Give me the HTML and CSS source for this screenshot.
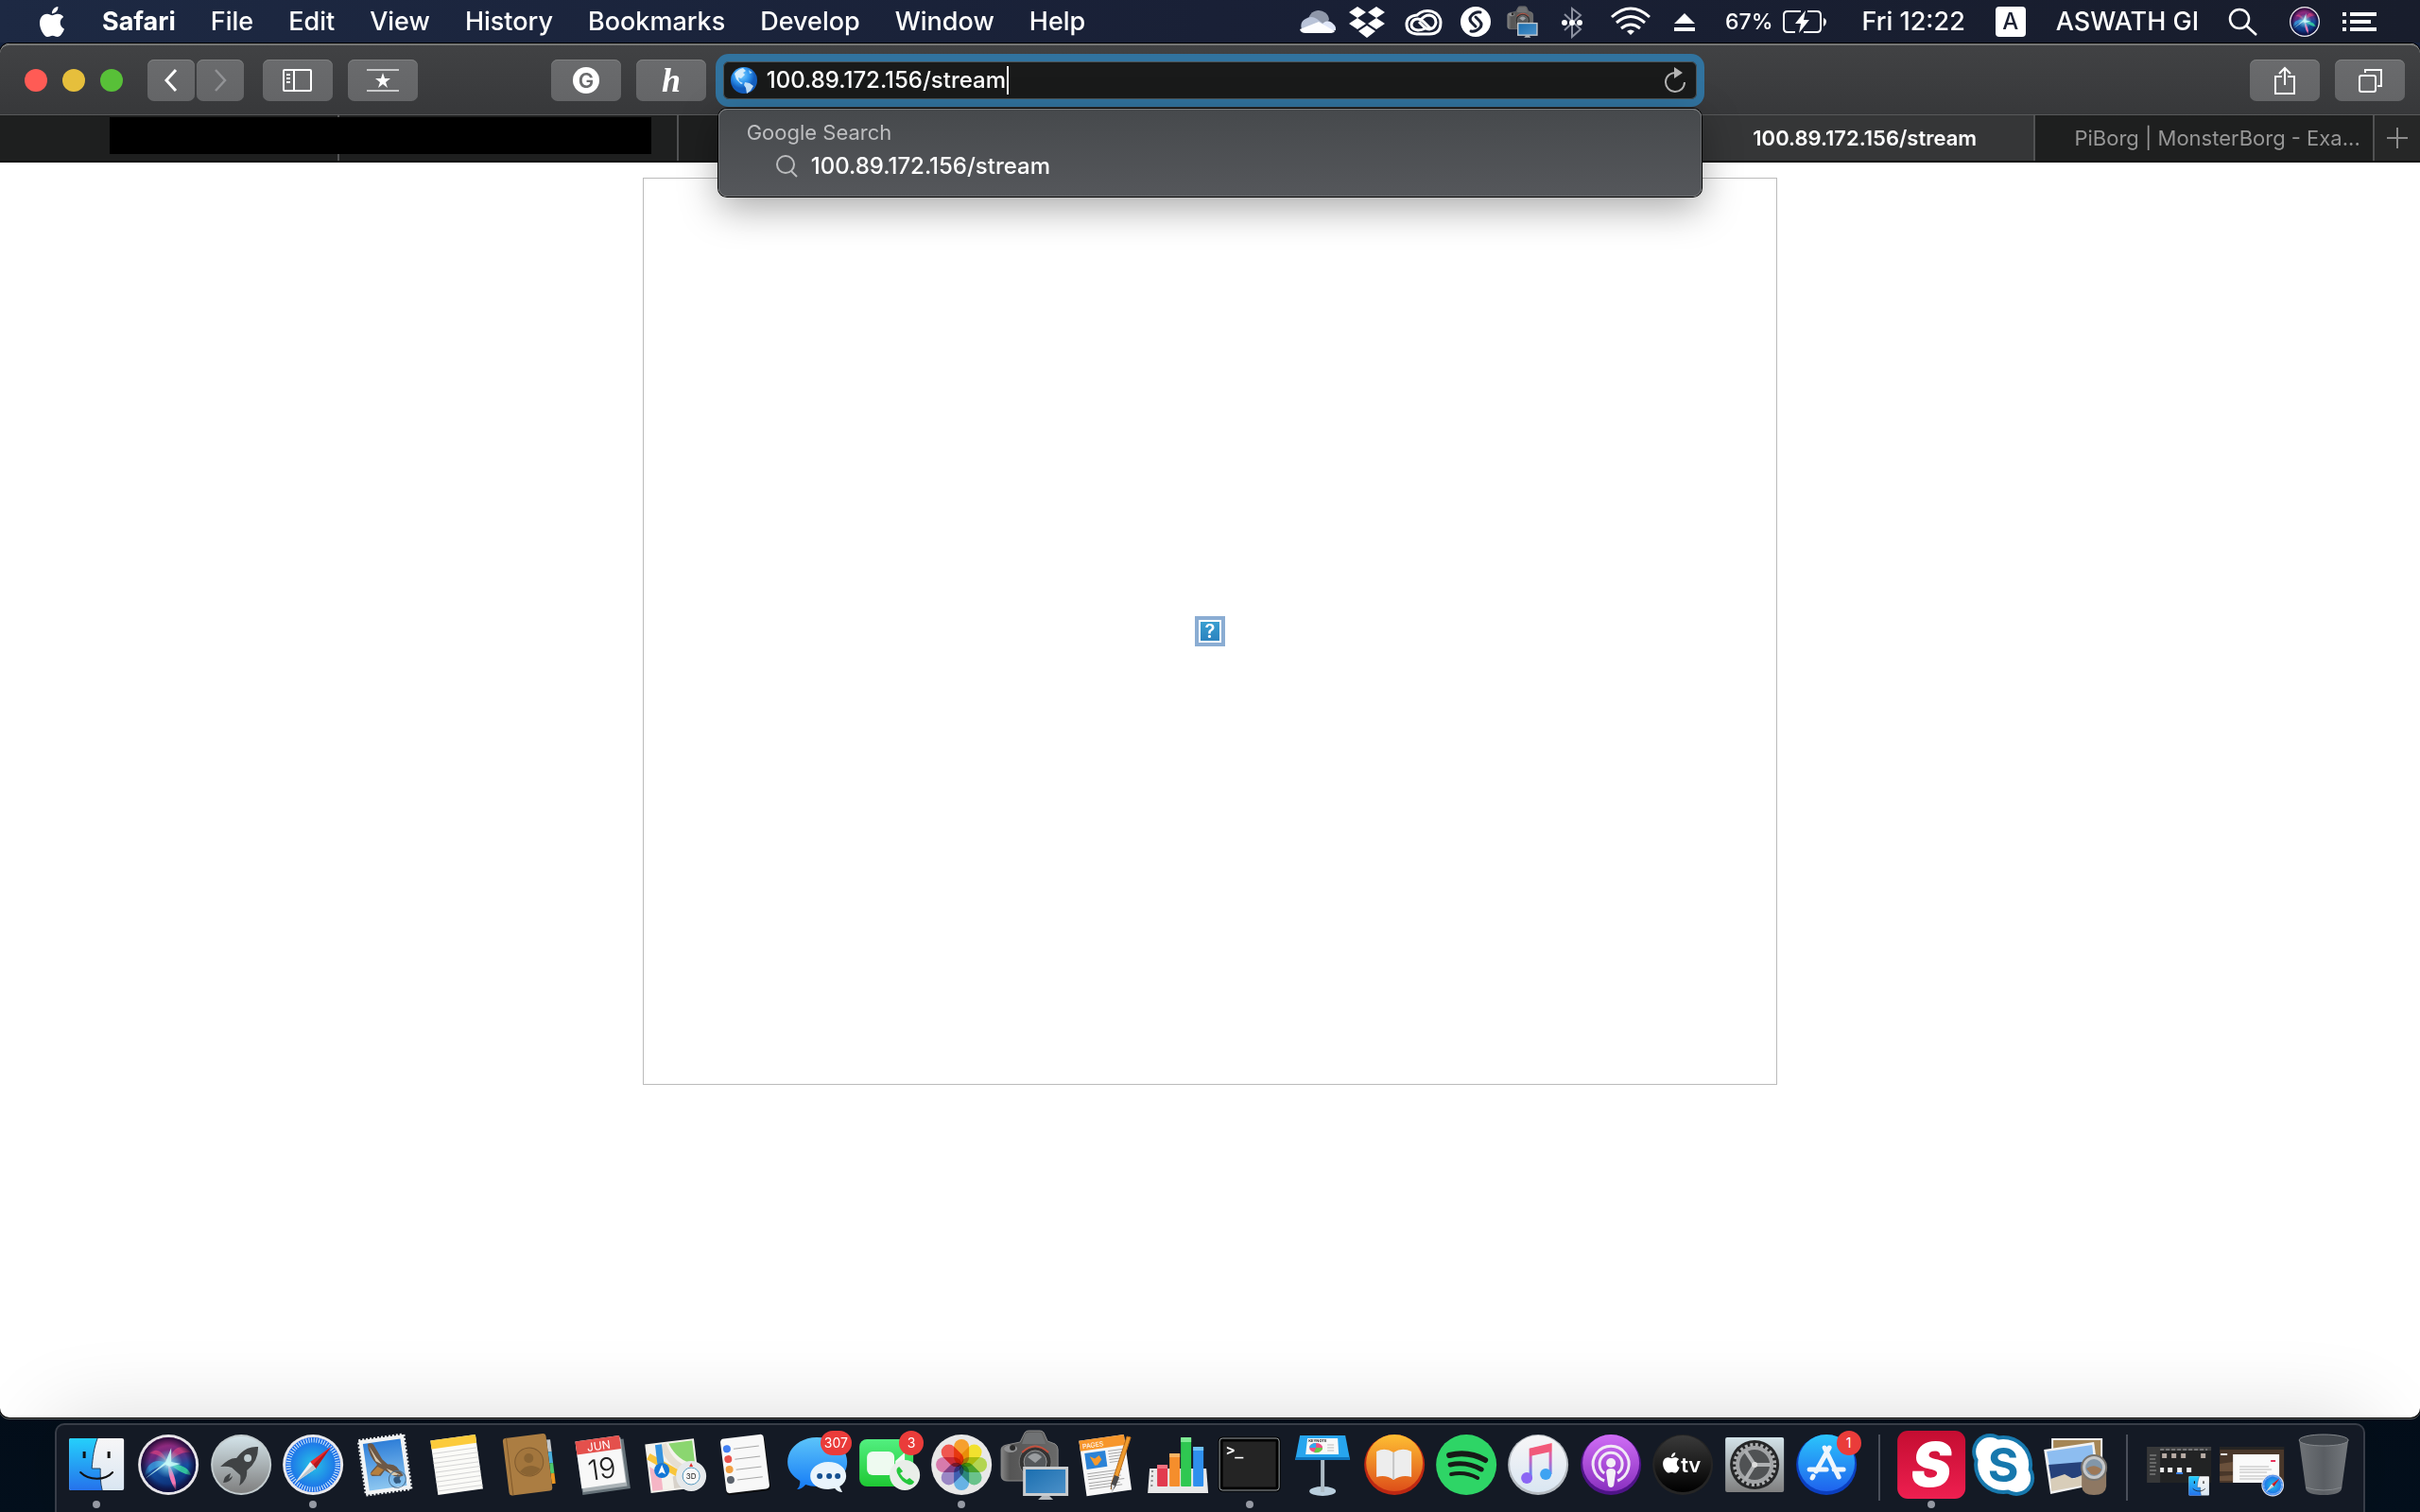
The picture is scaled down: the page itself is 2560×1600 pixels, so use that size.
FILE: index.html
```html
<!DOCTYPE html>
<html lang="en">
<head>
    <meta charset="UTF-8">
    <meta name="viewport" content="width=device-width, initial-scale=1.0">
    <title>100.89.172.156/stream</title>
    <link rel="stylesheet" href="styles.css">
</head>
<body>
    <!-- shared shapes and gradients -->
    <svg class="defs" width="0" height="0" aria-hidden="true">
        <defs>
            <linearGradient id="gSky" x2="0" y2="1"><stop stop-color="#25d0fb"/><stop offset="1" stop-color="#2572ec"/></linearGradient>
            <linearGradient id="gStamp" x2="0" y2="1"><stop stop-color="#2f7fd8"/><stop offset="1" stop-color="#8cc6f0"/></linearGradient>
            <linearGradient id="gSnow" x2="0" y2="1"><stop stop-color="#f7f6f7"/><stop offset="1" stop-color="#d9e6f2"/></linearGradient>
            <linearGradient id="gSteel" x2="0" y2="1"><stop stop-color="#d3e3e9"/><stop offset="1" stop-color="#7f7f7f"/></linearGradient>
            <radialGradient id="gCompass"><stop stop-color="#27c3e6"/><stop offset="1" stop-color="#1c67e8"/></radialGradient>
            <linearGradient id="gBlue" x2="0" y2="1"><stop stop-color="#5cc4fa"/><stop offset="1" stop-color="#157bf6"/></linearGradient>
            <linearGradient id="gGreen" x2="0" y2="1"><stop stop-color="#52ef80"/><stop offset="1" stop-color="#1fc934"/></linearGradient>
            <linearGradient id="gOrange" x2="0" y2="1"><stop stop-color="#febf33"/><stop offset="1" stop-color="#de4f19"/></linearGradient>
            <linearGradient id="gPurple" x2="0" y2="1"><stop stop-color="#cf6df5"/><stop offset="1" stop-color="#8a31c0"/></linearGradient>
            <linearGradient id="gDark" x2="0" y2="1"><stop stop-color="#3a3a3a"/><stop offset="1" stop-color="#000"/></linearGradient>
            <linearGradient id="gStore" x2="0" y2="1"><stop stop-color="#2bc5fb"/><stop offset="1" stop-color="#1f63ee"/></linearGradient>
            <linearGradient id="gRed" x2="0" y2="1"><stop stop-color="#c40d31"/><stop offset="1" stop-color="#ee1f50"/></linearGradient>
            <linearGradient id="gNote" x2="0" y2="1"><stop stop-color="#fb5c74"/><stop offset=".45" stop-color="#c765c0"/><stop offset="1" stop-color="#4b90fa"/></linearGradient>
            <linearGradient id="gScreen" x2="1" y2="1"><stop stop-color="#1b6fb0"/><stop offset="1" stop-color="#4b90c8"/></linearGradient>
            <linearGradient id="gBody" x2="1" y2="0"><stop stop-color="#858585"/><stop offset=".15" stop-color="#555"/><stop offset="1" stop-color="#6a6a6a"/></linearGradient>
            <linearGradient id="gBin" x2="1" y2="0"><stop stop-color="#6f7377"/><stop offset=".5" stop-color="#5a5e63"/><stop offset="1" stop-color="#75797d"/></linearGradient>
            <radialGradient id="gEarth" cx=".4" cy=".3"><stop stop-color="#7fd0ff"/><stop offset=".6" stop-color="#2f96f0"/><stop offset="1" stop-color="#145fc0"/></radialGradient>
            <linearGradient id="gSiri" x2=".2" y2="1"><stop stop-color="#c02a7c"/><stop offset=".4" stop-color="#6a2a80"/><stop offset=".65" stop-color="#1450a0"/><stop offset="1" stop-color="#0c2a70"/></linearGradient>
            <radialGradient id="gGlow"><stop stop-color="#e8fbff"/><stop offset=".4" stop-color="#7ddcf0" stop-opacity=".6"/><stop offset="1" stop-color="#7ddcf0" stop-opacity="0"/></radialGradient>
            <radialGradient id="gRim"><stop offset=".7" stop-color="#100830" stop-opacity="0"/><stop offset="1" stop-color="#100830" stop-opacity=".9"/></radialGradient>

            <g id="apple">
                <path d="M12.152 6.896c-.948 0-2.415-1.078-3.96-1.04-2.04.027-3.91 1.183-4.961 3.014-2.117 3.675-.546 9.103 1.519 12.09 1.013 1.454 2.208 3.09 3.792 3.039 1.52-.065 2.09-.987 3.935-.987 1.831 0 2.35.987 3.96.948 1.637-.026 2.676-1.48 3.676-2.948 1.156-1.688 1.636-3.325 1.662-3.415-.039-.013-3.182-1.221-3.22-4.857-.026-3.04 2.48-4.494 2.597-4.559-1.429-2.09-3.623-2.324-4.39-2.376-2-.156-3.675 1.09-4.61 1.09zM15.53 3.83c.843-1.012 1.4-2.427 1.245-3.83-1.207.052-2.662.805-3.532 1.818-.78.896-1.454 2.338-1.273 3.714 1.338.104 2.715-.688 3.559-1.701"/>
            </g>

            <g id="finder">
                <rect x="9" y="14" width="58" height="55" rx="2" fill="url(#gSnow)"/>
                <path d="M11 14h28c-4 11-5 20-6 32h9c0 8 0 15 2 23H11q-2 0-2-2V16q0-2 2-2z" fill="url(#gSky)"/>
                <path d="M39 14c-4 11-5 20-6 32h9c0 8 0 15 2 23" fill="none" stroke="#23415f" stroke-width="1"/>
                <path d="M25 28v7M51 28v7" stroke="#111" stroke-width="3"/>
                <path d="M21 50c9 9 26 9 34 0" fill="none" stroke="#111" stroke-width="2" stroke-linecap="round"/>
            </g>

            <g id="compass">
                <circle cx="38" cy="42" r="32" fill="#e9e9ec"/>
                <circle cx="38" cy="42" r="29" fill="url(#gCompass)"/>
                <circle cx="38" cy="42" r="26" fill="none" stroke="#d5ecfb" stroke-width="5" stroke-dasharray="1 1.72"/>
                <path d="M57 23L41 46l-6-7z" fill="#ea2a2d"/>
                <path d="M57 23L41 46l-3-4z" fill="#b3191f"/>
                <path d="M19 61l16-22 6 7z" fill="#f2f2f2"/>
                <path d="M19 61l19-19 3 4z" fill="#bfc6cc"/>
            </g>

            <g id="siri">
                <circle cx="38" cy="42" r="32" fill="#e6e4e8"/>
                <circle cx="38" cy="42" r="29" fill="url(#gSiri)"/>
                <path d="M38 41C32 26 24 24 18 30c8 0 14 4 20 11zM38 41c2-16 14-24 24-12-10-1-18 4-24 12z" fill="#e0437f" opacity=".65"/>
                <path d="M37 41C26 34 14 40 13 54c7-7 14-10 24-13z" fill="#35a8e8" opacity=".7"/>
                <path d="M39 41c10 0 20 3 23 12-8-1-15-5-23-12z" fill="#3be0a0" opacity=".8"/>
                <path d="M38 41c5 8 9 18 8 28-5-7-9-17-8-28z" fill="#f277b4"/>
                <circle cx="38" cy="42" r="29" fill="url(#gRim)"/>
                <circle cx="38" cy="41" r="15" fill="url(#gGlow)"/>
                <path d="M13 57l22-18 6-15 0 15 10 2-11 3-5-2z" fill="#c9fbf8" opacity=".85"/>
            </g>

            <g id="camera">
                <path d="M6 24q0-4 6-5l14-3 5-10q1-2 4-2h12q3 0 4 2l4 9 8 3q3 2 3 6v33H12q-6 0-6-6z" fill="url(#gBody)" stroke="#8b8b8b" stroke-width="1"/>
                <path d="M31 8l-3 10h25L49 7q-1-1-3-1H35q-3 0-4 2z" fill="#707274"/>
                <ellipse cx="16" cy="23" rx="7" ry="4" fill="#8f9092"/>
                <circle cx="18" cy="22" r="3" fill="#2b2b2b"/>
                <circle cx="42" cy="37" r="17" fill="#343434" stroke="#777"/>
                <path d="M28 27q14-13 28 0" fill="none" stroke="#c2503f" stroke-width="2"/>
                <circle cx="42" cy="37" r="12" fill="#55585b" stroke="#999"/>
                <path d="M34 32q8-8 15 0l-7 6z" fill="#9a9da0"/>
                <rect x="29" y="42" width="48" height="31" fill="#c9cccf"/>
                <rect x="32" y="45" width="42" height="25" fill="url(#gScreen)"/>
                <path d="M49 73h8l4 4H45z" fill="#b5b8bb"/>
            </g>
        </defs>
    </svg>

    <header class="menubar">
        <nav class="menus">
            <svg class="apple" viewBox="0 0 24 24"><use href="#apple" fill="#fff"/></svg>
            <button class="menu app-name">Safari</button>
            <button class="menu">File</button>
            <button class="menu">Edit</button>
            <button class="menu">View</button>
            <button class="menu">History</button>
            <button class="menu">Bookmarks</button>
            <button class="menu">Develop</button>
            <button class="menu">Window</button>
            <button class="menu">Help</button>
        </nav>
        <div class="status">
            <svg width="40" height="44">
                <path d="M11 22a11 11 0 0 1 22-2l-9 8z" fill="#8f97a9"/>
                <path d="M7 33a8 8 0 0 1 1-14q6-4 12 0l12 9-16 6z" fill="#b9c3d8"/>
                <path d="M26 24q5-5 10-1 5 4 4 8l-8 2z" fill="#dfe6f8"/>
                <path d="M2 30l20-8 17 10q-1 2-6 2H8q-5 0-6-4z" fill="#fdfdff"/>
            </svg>
            <svg width="42" height="44" fill="#fff">
                <path d="M11 6l9 6-9 6-9-6zM31 6l9 6-9 6-9-6zM11 18l9 6-9 6-9-6zM31 18l9 6-9 6-9-6zM21 26l9 6-9 7-9-7z"/>
            </svg>
            <svg width="54" height="44" fill="none" stroke="#fff" stroke-width="3">
                <path d="M20 15a14 12 0 0 1 25 8q0 12-12 12H20q-11-1-11-10t11-10z"/>
                <path d="M29 29q-4 2-8 2-7-1-7-6 1-6 7-6 3 0 6 3l7 7M24 20q4-5 9-5 7 1 7 8-1 6-7 7-3 0-6-3l-5-5"/>
            </svg>
            <svg width="32" height="44">
                <circle cx="16" cy="22" r="16" fill="#fff"/>
                <path d="M21 12q-5-1-9 3-4 4 0 8l4 4M11 32q5 1 9-3 4-4 0-8l-4-4" fill="none" stroke="#1a2033" stroke-width="3" stroke-linecap="round"/>
            </svg>
            <svg width="44" height="44"><use href="#camera" transform="translate(3 4) scale(.45)"/></svg>
            <svg width="36" height="44">
                <path d="M10 14l17 16-9 8V8l9 7-17 16" fill="none" stroke="#8c91a0" stroke-width="2"/>
                <g fill="#fff"><circle cx="10" cy="23" r="3"/><circle cx="18" cy="23" r="3"/><circle cx="26" cy="23" r="3"/></g>
            </svg>
            <svg width="64" height="44" fill="none" stroke="#fff" stroke-width="3">
                <path d="M12 17q20-18 40 0M17 23q15-13 30 0M22 29q10-8 20 0"/>
                <path d="M32 36l-4-4q4-3 8 0z" fill="#fff" stroke="none"/>
            </svg>
            <svg width="26" height="44" fill="#fff"><path d="M13 13l11 11H2zM2 28h22v4H2z"/></svg>
            <div class="battery">
                <span>67%</span>
                <svg width="46" height="44" fill="none" stroke="#fff" stroke-width="2">
                    <path d="M19 11H5q-4 0-4 4v14q0 4 4 4h8M26 11h10q4 0 4 4v14q0 4-4 4H22"/>
                    <path d="M24 10L13 24h6l-2 10 11-14h-6z" fill="#fff" stroke="none"/>
                    <path d="M43 18q3 1 3 4t-3 5z" fill="#fff" stroke="none"/>
                </svg>
            </div>
            <span class="status-text">Fri 12:22</span>
            <span class="keyboard"><b>A</b></span>
            <span class="status-text user">ASWATH GI</span>
            <svg width="52" height="44" fill="none" stroke="#fff" stroke-width="2.5">
                <circle cx="23" cy="19" r="10"/><path d="M30 26l11 10"/>
            </svg>
            <svg width="56" height="44"><use href="#siri" transform="translate(9 1) scale(.5)"/></svg>
            <svg width="36" height="44" fill="#fff"><path d="M0 12h4v4H0zM8 12h28v4H8zM0 20h4v4H0zM8 20h22v4H8zM0 28h4v4H0zM8 28h28v4H8z"/></svg>
        </div>
    </header>

    <main class="window">
        <div class="toolbar">
            <div class="tools">
                <div class="lights">
                    <button class="light red" aria-label="Close"></button>
                    <button class="light yellow" aria-label="Minimise"></button>
                    <button class="light green" aria-label="Zoom"></button>
                </div>
                <div class="history">
                    <button class="tool narrow" aria-label="Back"><svg width="20" height="28"><path d="M15 3L5 14l10 11" fill="none" stroke="#fff" stroke-width="3"/></svg></button>
                    <button class="tool narrow" aria-label="Forward"><svg width="20" height="28"><path d="M5 3l10 11L5 25" fill="none" stroke="#929396" stroke-width="2.5"/></svg></button>
                </div>
                <button class="tool" aria-label="Sidebar"><svg width="32" height="26" fill="none" stroke="#fff" stroke-width="2"><rect x="1" y="2" width="29" height="22" rx="1"/><path d="M12 2v22M4 7h4M4 11h4M4 15h4"/></svg></button>
                <button class="tool" aria-label="Top hits"><svg width="34" height="26"><path d="M0 2h34M0 24h34" stroke="#c9cacb" stroke-width="2"/><path d="M17 5l2 6h6l-5 4 2 6-5-4-5 4 2-6-5-4h6z" fill="#fff"/></svg></button>
                <button class="tool first-extension" aria-label="Grammarly"><svg width="28" height="28"><circle cx="14" cy="14" r="14" fill="#fff"/><text x="14" y="22" text-anchor="middle" font-size="22" font-weight="600" fill="#6a6b6d">G</text></svg></button>
                <button class="tool" aria-label="Honey"><svg width="40" height="44"><text class="script" x="20" y="34" text-anchor="middle" font-size="36" fill="#fff">h</text></svg></button>
            </div>

            <div class="address">
                <form class="address-field">
                    <svg width="28" height="28">
                        <circle cx="14" cy="14" r="14" fill="url(#gEarth)"/>
                        <path d="M4 7q4-5 9-6l3 3-3 2 2 2-4 4-3-1 1 4 4 2-2 1-5-5z" fill="#d4ecfb"/>
                        <path d="M15 16l5 1 4 3-3 5-4 3-1-6-2-3z" fill="#c3e0f7"/>
                        <path d="M19 3l4 3-3 1z" fill="#a4d8f7"/>
                    </svg>
                    <input class="url" type="text" aria-label="Address" value="100.89.172.156/stream">
                    <span class="caret"></span>
                    <button class="reload" type="button" aria-label="Reload"><svg width="26" height="30"><path d="M14 7a10 10 0 1 0 9 10" fill="none" stroke="#b4b4b4" stroke-width="2"/><path d="M12 1l9 6-9 6z" fill="#b4b4b4"/></svg></button>
                </form>
                <div class="suggestions">
                    <div class="provider">Google Search</div>
                    <div class="suggestion">
                        <svg width="24" height="24" fill="none" stroke="#bbbcbe" stroke-width="2"><circle cx="11" cy="10" r="9"/><path d="M17 17l6 6"/></svg>
                        <span>100.89.172.156/stream</span>
                    </div>
                </div>
            </div>

            <div class="tools right">
                <button class="tool" aria-label="Share"><svg width="24" height="32" fill="none" stroke="#fff" stroke-width="2"><path d="M9 12H2v18h20V12h-7M12 21V3M6 9l6-6 6 6"/></svg></button>
                <button class="tool" aria-label="Tabs"><svg width="26" height="26" fill="none" stroke="#fff" stroke-width="2"><rect x="2" y="8" width="17" height="17" rx="2"/><path d="M8 5V2h17v17h-4"/></svg></button>
            </div>
        </div>

        <div class="tabs">
            <div class="tab"></div>
            <div class="tab"></div>
            <div class="tab"></div>
            <div class="tab"></div>
            <div class="tab"></div>
            <div class="tab active"><span>100.89.172.156/stream</span></div>
            <div class="tab closable"><span>PiBorg | MonsterBorg - Exa...</span></div>
            <button class="new-tab" aria-label="New tab"><svg width="24" height="24"><path d="M12 1v22M1 12h22" stroke="#8c8c8c" stroke-width="2"/></svg></button>
            <div class="redacted"></div>
        </div>

        <div class="page">
            <div class="stream"><span class="missing">?</span></div>
        </div>
    </main>

    <footer class="dock">
        <div class="app running"><svg viewBox="0 0 76 92"><use href="#finder"/></svg></div>
        <div class="app"><svg viewBox="0 0 76 92"><use href="#siri"/></svg></div>
        <div class="app"><svg viewBox="0 0 76 92">
            <circle cx="38" cy="42" r="32" fill="#c3cccf"/><circle cx="38" cy="42" r="30" fill="url(#gSteel)"/>
            <path d="M56 23q-14-1-23 12-7-1-17 9 7-1 12 1l9 8q1 4-1 11 9-6 8-16 12-9 12-25z" fill="#404345"/>
            <path d="M27 51q-7 2-8 10 8 0 10-7l-4 3z" fill="#404345"/>
            <circle cx="45" cy="35" r="4" fill="#c0cdd1"/>
        </svg></div>
        <div class="app running"><svg viewBox="0 0 76 92"><use href="#compass"/></svg></div>
        <div class="app"><svg viewBox="0 0 76 92">
            <g transform="rotate(-8 38 42)">
                <rect x="14" y="13" width="48" height="58" fill="#f2f4f5" stroke="#f2f4f5" stroke-width="3" stroke-dasharray="2 2"/>
                <rect x="18" y="17" width="40" height="50" fill="url(#gStamp)"/>
                <path d="M23 18q3-2 6 1l7 17 5 6q6 0 9 4l6 10q-6 2-10-1l-9-7-5 5-9-1q-3-3 1-6l6-5q-8-11-7-23z" fill="#6d5846"/>
                <path d="M24 20l6 13 5 8-6-4zM39 46l14 9-9-1z" fill="#d8c9af"/>
                <path d="M21 50l9-7 6 4-6 5z" fill="#b57f3e"/>
                <circle cx="49" cy="59" r="9" fill="none" stroke="#4d7294" stroke-width="1"/>
                <use href="#apple" transform="translate(44 54) scale(.4)" fill="#35597d"/>
            </g>
        </svg></div>
        <div class="app"><svg viewBox="0 0 76 92">
            <g transform="rotate(-8 38 42)">
                <rect x="14" y="13" width="48" height="58" fill="#fbfbf8"/>
                <rect x="14" y="13" width="48" height="9" fill="#fccb3b"/>
                <path d="M14 27h48M14 32h48M14 37h48M14 42h48M14 47h48M14 52h48M14 57h48M14 62h48M14 67h48" stroke="#d4d4d4" stroke-width="1"/>
            </g>
        </svg></div>
        <div class="app"><svg viewBox="0 0 76 92">
            <g transform="rotate(-7 38 42)">
                <path d="M59 18h4v13h-4z" fill="#c5c9cb"/><path d="M59 31h4v12h-4z" fill="#4aaedb"/><path d="M59 43h4v11h-4z" fill="#4cc96c"/><path d="M59 54h4v11h-4z" fill="#ec9720"/>
                <rect x="13" y="11" width="46" height="61" rx="3" fill="#ab7d42"/>
                <path d="M17 11v61" stroke="#80592b" stroke-width="1"/>
                <circle cx="38" cy="39" r="15" fill="#a3763d" stroke="#805b2f" stroke-width="1"/>
                <circle cx="38" cy="35" r="5" fill="#8a6433"/><path d="M27 48q11-10 22 0-11 11-22 0z" fill="#8a6433"/>
            </g>
        </svg></div>
        <div class="app"><svg viewBox="0 0 76 92">
            <g transform="rotate(-8 38 42)">
                <rect x="14" y="18" width="51" height="53" fill="#68747b"/>
                <rect x="15" y="16" width="47" height="52" fill="#aab2b6"/>
                <rect x="14" y="14" width="47" height="50" fill="#f8f8f8"/>
                <rect x="14" y="14" width="47" height="14" fill="#e4504c"/>
                <text x="38" y="26" text-anchor="middle" font-size="12" fill="#fff">JUN</text>
                <text class="thin" x="38" y="57" text-anchor="middle" font-size="30" fill="#222">19</text>
            </g>
        </svg></div>
        <div class="app"><svg viewBox="0 0 76 92">
            <g transform="rotate(-7 38 42)">
                <rect x="11" y="17" width="52" height="52" fill="#f4f2ec"/>
                <path d="M36 19h25v25q-18-5-25-25z" fill="#8bd670"/>
                <path d="M30 19q5 27 31 33" fill="none" stroke="#e6dfd2" stroke-width="7"/>
                <path d="M13 30l45 34" stroke="#f8c53b" stroke-width="7"/>
                <path d="M13 41l11 9v17H13z" fill="#f5b5c5"/>
                <path d="M25 19v20" stroke="#3491dd" stroke-width="7"/>
                <path d="M36 54h24v13H36z" fill="#d7d2ca"/>
            </g>
            <circle cx="26" cy="48" r="8" fill="#1477d6"/><path d="M26 42l4 10-4-2-4 2z" fill="#fff"/>
            <circle cx="57" cy="54" r="16" fill="#e6e9eb"/><circle cx="57" cy="54" r="9" fill="#f8f8f8" stroke="#579ac0" stroke-width="1"/>
            <path d="M57 40l2 4h-4z" fill="#e2312d"/>
            <text x="57" y="57" text-anchor="middle" font-size="8" fill="#222">3D</text>
        </svg></div>
        <div class="app"><svg viewBox="0 0 76 92">
            <g transform="rotate(-7 38 42)">
                <rect x="15" y="14" width="47" height="58" rx="4" fill="#0b0c0e"/>
                <rect x="15" y="12" width="46" height="58" rx="4" fill="#f8f8f8"/>
                <path d="M28 24h27M28 35h27M28 46h27M28 57h27" stroke="#a9a9a9" stroke-width="1"/>
                <circle cx="21" cy="23" r="4" fill="#417ff2"/><circle cx="21" cy="34" r="4" fill="#e9524c"/><circle cx="21" cy="45" r="4" fill="#f1a043"/><circle cx="21" cy="56" r="4" fill="#5b626c"/>
            </g>
        </svg></div>
        <div class="app"><svg viewBox="0 0 76 92">
            <path d="M37 13c18 0 32 11 32 26S55 65 37 65q-7 0-12-2-4 5-9 5 4-4 3-9C11 54 6 48 6 39c0-15 14-26 31-26z" fill="url(#gBlue)"/>
            <path d="M49 39c11 0 19 6 19 15q0 7-7 11l3 6q-5 0-8-4l-7 1c-11 0-19-6-19-14s8-15 19-15z" fill="#e9f4fc"/>
            <g fill="#155091"><circle cx="40" cy="54" r="3"/><circle cx="50" cy="54" r="3"/><circle cx="59" cy="54" r="3"/></g>
        </svg><span class="badge">307</span></div>
        <div class="app"><svg viewBox="0 0 76 92">
            <rect x="6" y="15" width="57" height="50" rx="8" fill="url(#gGreen)"/>
            <rect x="14" y="28" width="29" height="25" rx="6" fill="#eefaf0"/><path d="M44 38l10-9v22l-10-6z" fill="#eefaf0"/>
            <circle cx="54" cy="53" r="16" fill="#e9eee9"/>
            <path d="M48 44q-4 2-2 7 4 9 12 12 4 1 6-3l-5-4-3 2q-5-3-7-7l3-2z" fill="#24c83c"/>
        </svg><span class="badge">3</span></div>
        <div class="app running"><svg viewBox="0 0 76 92">
            <circle cx="38" cy="42" r="32" fill="#e8e8e8"/>
            <g class="petals">
                <rect x="30" y="15" width="16" height="27" rx="8" fill="#f6a02e"/>
                <rect x="30" y="15" width="16" height="27" rx="8" fill="#f2e12e" transform="rotate(45 38 42)"/>
                <rect x="30" y="15" width="16" height="27" rx="8" fill="#b3d552" transform="rotate(90 38 42)"/>
                <rect x="30" y="15" width="16" height="27" rx="8" fill="#6ac28b" transform="rotate(135 38 42)"/>
                <rect x="30" y="15" width="16" height="27" rx="8" fill="#67b2e4" transform="rotate(180 38 42)"/>
                <rect x="30" y="15" width="16" height="27" rx="8" fill="#9a87c5" transform="rotate(225 38 42)"/>
                <rect x="30" y="15" width="16" height="27" rx="8" fill="#d77bac" transform="rotate(270 38 42)"/>
                <rect x="30" y="15" width="16" height="27" rx="8" fill="#f0574f" transform="rotate(315 38 42)"/>
            </g>
        </svg></div>
        <div class="app"><svg viewBox="0 0 76 92"><use href="#camera" transform="translate(-2 2)"/></svg></div>
        <div class="app"><svg viewBox="0 0 76 92">
            <g transform="rotate(-8 38 42)">
                <rect x="13" y="13" width="48" height="59" fill="#f7f7f7"/><rect x="13" y="13" width="48" height="11" fill="#f7962b"/>
                <text x="16" y="22" font-size="7" fill="#fff">PAGES</text>
                <rect x="17" y="27" width="22" height="17" fill="#2c83d6"/><path d="M22 31l5 3 5-3 2 5-5 5h-3z" fill="#f79a2c"/>
                <path d="M42 28h15M42 31h15M42 34h15M42 37h15M42 40h15M17 49h37M17 52h32M17 55h35M17 59h38M17 62h33M17 65h35" stroke="#a6a6a6" stroke-width="1"/>
            </g>
            <path d="M60 12l4 1-16 50-5 5 1-7z" fill="#f09c2e" stroke="#b96a19" stroke-width="1"/>
            <path d="M47 53l5 2-4 10-4 6-1-8z" fill="#4a4a4c"/><path d="M44 63l3 1-3 8z" fill="#e5e5e5"/>
        </svg></div>
        <div class="app"><svg viewBox="0 0 76 92">
            <path d="M8 46h60l2 26H6z" fill="#e9e9e9"/><path d="M11 48l-1 20" stroke="#888" stroke-width="2" stroke-dasharray="2 3"/>
            <rect x="16" y="42" width="11" height="23" rx="1" fill="#e23a4e"/><rect x="29" y="30" width="11" height="35" rx="1" fill="#f58e2c"/>
            <rect x="41" y="13" width="11" height="52" rx="1" fill="#2fc851"/><rect x="54" y="23" width="11" height="42" rx="1" fill="#2f90ee"/>
            <path d="M16 42h11v4H16z" fill="#f0717f"/><path d="M29 30h11v4H29z" fill="#fbb465"/><path d="M41 13h11v5H41z" fill="#7feb94"/><path d="M54 23h11v4H54z" fill="#6fc2f8"/>
        </svg></div>
        <div class="app running"><svg viewBox="0 0 76 92">
            <rect x="7" y="15" width="61" height="53" rx="2" fill="#242424" stroke="#000" stroke-width="5"/>
            <rect x="6" y="14" width="63" height="55" rx="3" fill="none" stroke="#9aa1a5" stroke-width="1"/>
            <text class="prompt" x="13" y="32" font-size="15" fill="#fff">&gt;_</text>
        </svg></div>
        <div class="app"><svg viewBox="0 0 76 92">
            <ellipse cx="38" cy="70" rx="14" ry="5" fill="#b9cedd"/><path d="M36 37h4v34h-4z" fill="#aebcc6"/>
            <path d="M14 11h48l5 26H9z" fill="#27a5ee"/><path d="M10 34h56l1 3H9z" fill="#0e74bc"/>
            <path d="M22 14h32l1 17H20z" fill="#f8f8f8"/>
            <text x="23" y="18" font-size="4" font-weight="700" fill="#333">KEYNOTE</text>
            <ellipse cx="31" cy="24" rx="7" ry="5" fill="#ee4f83"/><path d="M31 24v-5a7 5 0 0 0-7 5z" fill="#31a9ef"/><path d="M31 24h7a7 5 0 0 1-9 5z" fill="#67ca49"/>
            <path d="M43 21h7M43 24h7M43 27h7" stroke="#bbb"/>
        </svg></div>
        <div class="app"><svg viewBox="0 0 76 92">
            <circle cx="38" cy="42" r="32" fill="#be2812"/><circle cx="38" cy="40" r="30" fill="url(#gOrange)"/>
            <path d="M37 29q-9-6-18-1v27q10-3 18 3 9-6 19-3V28q-10-5-19 1z" fill="#ededed"/><path d="M37 29v29" stroke="#c6c6c6" stroke-width="2"/>
        </svg></div>
        <div class="app"><svg viewBox="0 0 76 92">
            <circle cx="38" cy="42" r="32" fill="#2ed566"/>
            <g fill="none" stroke="#171a17" stroke-linecap="round"><path d="M20 32q20-5 38 5" stroke-width="6"/><path d="M21 42q17-4 33 5" stroke-width="5"/><path d="M22 52q15-3 28 4" stroke-width="4"/></g>
        </svg></div>
        <div class="app"><svg viewBox="0 0 76 92">
            <circle cx="38" cy="42" r="32" fill="#b6bcc2"/><circle cx="38" cy="41" r="30" fill="url(#gSnow)"/>
            <path d="M30 56V26l21-5v31" fill="none" stroke="url(#gNote)" stroke-width="3"/><path d="M29 25l23-5v8l-23 5z" fill="#f15a7a"/>
            <circle cx="26" cy="56" r="6" fill="#8b66f4"/><circle cx="46" cy="52" r="6" fill="#3ea3f2"/>
        </svg></div>
        <div class="app"><svg viewBox="0 0 76 92">
            <circle cx="38" cy="42" r="32" fill="#4f1488"/><circle cx="38" cy="40" r="30" fill="url(#gPurple)"/>
            <g fill="none" stroke="#f1eaf5" stroke-width="3"><path d="M31 59a19 19 0 1 1 14 0"/><path d="M31 51a12 12 0 1 1 14 0"/></g>
            <circle cx="38" cy="40" r="5" fill="#f4f0f6"/><path d="M33 50q0-4 5-4t5 4l-2 14q-1 2-3 2t-3-2z" fill="#f4f0f6"/>
        </svg></div>
        <div class="app"><svg viewBox="0 0 76 92">
            <circle cx="38" cy="42" r="32" fill="#252525"/><circle cx="38" cy="41" r="30" fill="url(#gDark)"/>
            <use href="#apple" transform="translate(15 29) scale(.9)" fill="#fff"/>
            <text x="36" y="50" font-size="22" font-weight="600" fill="#fff">tv</text>
        </svg></div>
        <div class="app"><svg viewBox="0 0 76 92">
            <rect x="7" y="13" width="62" height="58" rx="2" fill="url(#gSteel)"/>
            <circle cx="38" cy="42" r="26" fill="#262728"/>
            <circle cx="38" cy="42" r="21" fill="none" stroke="#aeb0b1" stroke-width="4" stroke-dasharray="3 2.5"/>
            <circle cx="38" cy="42" r="18" fill="#505254" stroke="#a2a4a6" stroke-width="4"/>
            <path d="M38 42h17M38 42l-10-15M38 42L28 58" stroke="#aeb0b2" stroke-width="4"/><circle cx="38" cy="42" r="3" fill="#ddd"/>
        </svg></div>
        <div class="app"><svg viewBox="0 0 76 92">
            <circle cx="38" cy="42" r="32" fill="#0b3fc0"/><circle cx="38" cy="40" r="30" fill="url(#gStore)"/>
            <path d="M41 24L27 49M36 24l15 31M20 47h18M46 47h10M24 54l-1 2" stroke="#eff6fc" stroke-width="5" stroke-linecap="round"/>
        </svg><span class="badge">1</span></div>
        <div class="divider"></div>
        <div class="app running"><svg viewBox="0 0 76 92">
            <rect x="2" y="6" width="72" height="72" rx="11" fill="url(#gRed)"/>
            <text x="38" y="65" text-anchor="middle" font-size="64" font-weight="900" font-style="italic" fill="#fff">S</text>
        </svg></div>
        <div class="app"><svg viewBox="0 0 76 92">
            <g fill="#1778ad"><circle cx="38" cy="42" r="31"/><circle cx="24" cy="28" r="19"/><circle cx="52" cy="56" r="19"/></g>
            <g fill="#fff"><circle cx="38" cy="42" r="27"/><circle cx="24" cy="28" r="15"/><circle cx="52" cy="56" r="15"/></g>
            <text x="38" y="60" text-anchor="middle" font-size="50" font-weight="700" fill="#1778ad">S</text>
        </svg></div>
        <div class="app"><svg viewBox="0 0 76 92">
            <path d="M13 14h54v48H13z" fill="#eee"/><path d="M15 16h50v44H15z" fill="#a58656"/>
            <path d="M5 26l53-8 6 44-52 11z" fill="#f2f2f2"/>
            <path d="M8 28l48-7 2 18-47 5z" fill="#8dbdf0"/><path d="M10 42l48-4 3 14-48 8z" fill="#26417a"/><path d="M12 57l15-5 9 5 9-4 16 2 1 6-49 9z" fill="#d8cdb9"/>
            <path d="M45 46v19q1 9 13 9t13-9V46z" fill="#8e7863"/><circle cx="58" cy="45" r="13" fill="#c5c7c9" stroke="#77736d" stroke-width="2"/><circle cx="58" cy="45" r="9" fill="#8296a8"/><path d="M50 46q8-6 16 1-4 8-11 5z" fill="#9d7857"/>
        </svg></div>
        <div class="divider"></div>
        <div class="app"><svg viewBox="0 0 76 92">
            <rect x="4" y="23" width="68" height="38" fill="#222324"/><rect x="4" y="23" width="14" height="38" fill="#373839"/><path d="M18 23h54v4H18z" fill="#404142"/>
            <path d="M7 32h7M7 36h6M7 40h7M7 44h6M7 48h7M7 52h6" stroke="#9a9a9a" stroke-width="1"/><path d="M18 26h50" stroke="#aaa" stroke-dasharray="4 2"/>
            <g fill="#b7aba4"><path d="M20 30h5v5h-5zM30 30h5v5h-5zM40 30h5v5h-5zM61 30h5v5h-5z"/></g>
            <g fill="#eee"><path d="M18 45h4v5h-4zM26 45h5v5h-5zM36 45h5v5h-5zM46 45h5v5h-5z"/></g><path d="M35 51h7" stroke="#3b82e6" stroke-width="2"/>
            <use href="#finder" transform="translate(45 49) scale(.37)"/>
        </svg></div>
        <div class="app"><svg viewBox="0 0 76 92">
            <rect x="4" y="23" width="68" height="38" fill="#49372a"/><path d="M4 23h68v3H4z" fill="#252423"/><path d="M4 41l14-2v10H4zM4 54l14-1v6H4z" fill="#6b513c"/>
            <path d="M5 30h7v2H5z" fill="#eee"/>
            <path d="M18 31h49v30H18z" fill="#fafafa"/><path d="M58 38h5" stroke="#e8305a" stroke-width="2"/>
            <path d="M25 44h31M25 47h34M25 50h29M25 54h30M25 57h27" stroke="#bbb" stroke-width="1"/>
            <use href="#compass" transform="translate(46 48) scale(.37)"/>
        </svg></div>
        <div class="app"><svg viewBox="0 0 76 92">
            <path d="M12 16l7 51q1 7 19 7t19-7l7-51z" fill="url(#gBin)"/>
            <ellipse cx="38" cy="16" rx="26" ry="6" fill="#44494f" stroke="#85898d" stroke-width="1"/>
            <path d="M19 66q19 6 38 0" fill="none" stroke="#83878b" stroke-width="1"/>
        </svg></div>
    </footer>
</body>
</html>
```

FILE: styles.css
```css
* {
    box-sizing: border-box;
}

body {
    margin: 0;
    height: 100vh;
    display: flex;
    flex-direction: column;
    overflow: hidden;
    font-family: Inter, "Liberation Sans", sans-serif;
    color: #fff;
    background: linear-gradient(#16233f, #02050b 60%, #04101d);
}

button {
    padding: 0;
    border: none;
    background: none;
    color: inherit;
    font: inherit;
}

svg {
    display: block;
    flex: none;
}

.defs {
    position: absolute;
}

/* menu bar */
.menubar {
    display: flex;
    justify-content: space-between;
    height: 45px;
    padding: 0 46px 0 39px;
    background: linear-gradient(90deg, #1d2943, #192036 50%, #181d2c);
    font-size: 27px;
    font-weight: 500;
}

.menus,
.status {
    display: flex;
    align-items: center;
}

.menus {
    gap: 37px;
}

.apple {
    width: 32px;
    height: 32px;
}

.app-name {
    font-weight: 700;
}

.status {
    gap: 12px;
}

.status-text {
    padding: 0 8px;
}

.battery {
    display: flex;
    align-items: center;
    gap: 10px;
    padding: 0 18px;
    font-size: 23px;
}

.keyboard {
    display: flex;
    justify-content: center;
    width: 56px;
}

.keyboard b {
    width: 32px;
    height: 32px;
    border-radius: 4px;
    background: #fff;
    color: #1a2033;
    font-size: 24px;
    font-weight: 500;
    line-height: 32px;
    text-align: center;
}

/* browser window */
.window {
    flex: 1;
    display: flex;
    flex-direction: column;
    margin: 1px 0 6px;
    border-radius: 10px;
    box-shadow: 0 0 0 1px #000, 0 1px 0 1px #5d605f;
    background: #fff;
}

.toolbar {
    display: grid;
    grid-template-columns: 1fr 41.4% 1fr;
    gap: 10px;
    align-items: center;
    height: 76px;
    padding: 0 16px;
    border: solid #58595a;
    border-width: 2px 0 1px;
    border-top-color: #757675;
    border-radius: 10px 10px 0 0;
    background: linear-gradient(#414244, #37383a);
}

.tools {
    display: flex;
    align-items: center;
    gap: 16px;
}

.right {
    justify-content: flex-end;
}

.lights {
    display: flex;
    gap: 16px;
    margin: 0 10px;
}

.light {
    width: 24px;
    height: 24px;
    border-radius: 50%;
}

.red {
    background: #ff5b55;
}

.yellow {
    background: #e6bf3c;
}

.green {
    background: #58c038;
}

.history {
    display: flex;
    gap: 2px;
    margin-right: 4px;
}

.tool {
    display: flex;
    align-items: center;
    justify-content: center;
    width: 74px;
    height: 44px;
    border-radius: 7px;
    background: linear-gradient(#6a6b6d, #646567);
    box-shadow: inset 0 1px #7f8081;
}

.narrow {
    width: 50px;
}

.first-extension {
    margin-left: auto;
}

.script {
    font-family: "Liberation Serif", serif;
    font-style: italic;
    font-weight: 700;
}

.address {
    position: relative;
    z-index: 2;
}

.address-field {
    display: flex;
    align-items: center;
    height: 56px;
    padding: 0 10px 0 8px;
    border: 8px solid #31739f;
    border-radius: 14px;
    background: #191a1a;
    box-shadow: inset 0 0 0 1px #4c5356;
}

.url {
    width: 254px;
    margin-left: 10px;
    padding: 0;
    border: none;
    outline: none;
    background: none;
    color: #fff;
    font: 500 24px Inter, "Liberation Sans", sans-serif;
}

.caret {
    width: 2px;
    height: 30px;
    background: #fff;
}

.reload {
    margin-left: auto;
}

.suggestions {
    position: absolute;
    top: 58px;
    left: 3px;
    right: 3px;
    height: 93px;
    padding: 11px 30px;
    border-radius: 9px;
    background: linear-gradient(#46494c, #55575b);
    box-shadow: inset 0 1px #7c7e7f, inset 0 0 0 1px #6c6e71, 0 0 0 1px #000, 0 12px 40px rgba(0, 0, 0, 0.35);
}

.provider {
    color: #bdbec0;
    font-size: 22px;
    line-height: 28px;
}

.suggestion {
    display: flex;
    align-items: center;
    gap: 14px;
    padding-left: 30px;
    font-size: 24px;
    font-weight: 500;
    line-height: 44px;
}

/* tabs */
.tabs {
    position: relative;
    display: flex;
    height: 50px;
    border-bottom: 2px solid #0b0b0b;
    background: #1e1f1f;
    font-size: 22px;
}

.tab {
    flex: 1;
    min-width: 0;
    border-right: 2px solid #515253;
    color: #969696;
    line-height: 48px;
    text-align: center;
    white-space: nowrap;
}

.active {
    background: #353637;
    color: #fff;
    font-weight: 600;
}

.closable span {
    padding-left: 28px;
}

.new-tab {
    display: flex;
    align-items: center;
    justify-content: center;
    width: 48px;
    background: #262727;
}

.redacted {
    position: absolute;
    top: 2px;
    left: 116px;
    width: 573px;
    height: 39px;
    background: #000;
}

/* page */
.page {
    flex: 1;
    padding: 16px;
}

.stream {
    display: flex;
    align-items: center;
    justify-content: center;
    max-width: 1200px;
    height: 960px;
    margin: 0 auto;
    border: 1px solid #bbb;
}

.missing {
    width: 32px;
    height: 32px;
    padding: 2px;
    border: 4px solid #8badd3;
    background: linear-gradient(#3a9fd0, #2b83bf) content-box, #fff;
    font-size: 20px;
    font-weight: 600;
    line-height: 20px;
    text-align: center;
}

/* dock */
.dock {
    position: relative;
    display: flex;
    height: 94px;
    margin: 0 58px;
    padding: 0 4px;
    border: 2px solid #383d47;
    border-bottom: none;
    border-radius: 10px 10px 0 0;
    background: #141a25;
    box-shadow: 0 0 90px rgba(0, 0, 0, 0.17);
}

.app {
    position: relative;
    flex: 1;
}

.app svg {
    width: 100%;
    height: 92px;
}

.running::after {
    content: "";
    position: absolute;
    bottom: 4px;
    left: calc(50% - 4px);
    width: 8px;
    height: 8px;
    border-radius: 50%;
    background: #9599a3;
}

.badge {
    position: absolute;
    top: 6px;
    right: 2px;
    min-width: 26px;
    height: 26px;
    padding: 0 4px;
    border-radius: 13px;
    background: #ea3c3a;
    font-size: 14px;
    line-height: 26px;
    text-align: center;
}

.divider {
    width: 34px;
    margin: 10px 0 12px;
    background: linear-gradient(#4a4f5a, #4a4f5a) center / 2px 100% no-repeat;
}

.thin {
    font-weight: 300;
}

.prompt {
    font-family: "DejaVu Sans Mono", monospace;
    font-weight: 700;
}

.petals {
    isolation: isolate;
}

.petals rect {
    mix-blend-mode: multiply;
}
```
